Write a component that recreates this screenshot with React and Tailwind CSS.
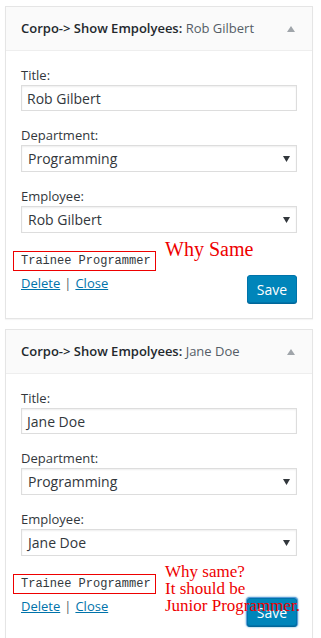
import React from 'react';

const font = { fontFamily: '"Open Sans", "Noto Sans", sans-serif' };

// petite flèche du select
const Caret = () => (
  <svg width="7" height="6" viewBox="0 0 7 6" className="shrink-0">
    <path d="M0 0 L7 0 L3.5 6 Z" fill="#32373c" />
  </svg>
);

const Field = ({ label, value, select, first }) => (
  <div className={first ? '' : 'mt-[15px]'}>
    <div className="h-[18px] leading-[18px] text-[13px] text-[#32373c] mb-[1px]">{label}</div>
    <div
      className={`flex items-center justify-between border border-[#dddddd] bg-white shadow-[inset_0_1px_2px_rgba(0,0,0,0.07)] text-[14px] text-[#32373c] ${
        select ? 'h-[27px] pl-[6px] pr-[6px]' : 'h-[26px] pl-[5px]'
      }`}
    >
      <span>{value}</span>
      {select && <Caret />}
    </div>
  </div>
);

const Widget = ({ name, note, focused }) => (
  <div className="border border-[#e5e5e5] bg-white shadow-[0_1px_1px_rgba(0,0,0,0.04)]">
    <div className="h-[44px] flex items-center justify-between pl-[15px] pr-[17px] bg-[#fafafa] border-b border-[#eeeeee]">
      <div className="text-[13px] font-semibold text-[#23282d]">
        Corpo-&gt; Show Empolyees: <span className="font-normal text-[#555d66]">{name}</span>
      </div>
      <svg width="8" height="6" viewBox="0 0 8 6">
        <path d="M0 6 L4 0 L8 6 Z" fill="#a0a5aa" />
      </svg>
    </div>

    <div className="px-[15px] pt-[15px] pb-[15px]">
      <Field label="Title:" value={name} first />
      <Field label="Department:" value="Programming" select />
      <Field label="Employee:" value={name} select />

      <div className="relative mt-[13px] h-[20px]">
        <div className="inline-block ml-[-8px] h-[20px] border border-[#ee0000] pl-[7px] pr-[4px] leading-[18px] text-[12px] text-[#32373c]"
          style={{ fontFamily: '"Liberation Mono", "DejaVu Sans Mono", monospace' }}>
          Trainee Programmer
        </div>
        {note}
      </div>

      <div className="flex items-start justify-between mt-[9px]">
        <div className="text-[13px] leading-[20px] mt-[-2px] text-[#555d66]">
          <a href="#" className="text-[#0073aa] underline">Delete</a>
          <span className="mx-[4px]">|</span>
          <a href="#" className="text-[#0073aa] underline">Close</a>
        </div>
        <button
          type="button"
          className={`h-[28px] w-[50px] rounded-[3px] border border-[#0073aa] bg-[#0085ba] text-white text-[14px] ${
            focused
              ? 'shadow-[0_1px_0_#006799,0_0_0_1px_#5b9dd9,0_0_2px_1px_rgba(30,140,190,0.8)]'
              : 'shadow-[0_1px_0_#006799]'
          }`}
        >
          Save
        </button>
      </div>
    </div>
  </div>
);

const serif = { fontFamily: '"Liberation Serif", "Times New Roman", serif' };

export default function App() {
  return (
    <div className="w-[321px] h-[638px] overflow-hidden bg-white pl-[5px] pr-[8px] pt-[6px]" style={font}>
      <Widget
        name="Rob Gilbert"
        note={
          <div className="absolute left-[144px] top-[-7px] text-[20px] leading-[20px] text-[#ee0000] whitespace-nowrap" style={serif}>
            Why Same
          </div>
        }
      />
      <div className="h-[10px]" />
      <Widget
        name="Jane Doe"
        focused
        note={
          <div className="absolute z-10 left-[144px] top-[-6px] text-[17px] leading-[17px] text-[#ee0000] whitespace-nowrap" style={serif}>
            Why same?<br />
            It should be<br />
            Junior Programmer.
          </div>
        }
      />
    </div>
  );
}
